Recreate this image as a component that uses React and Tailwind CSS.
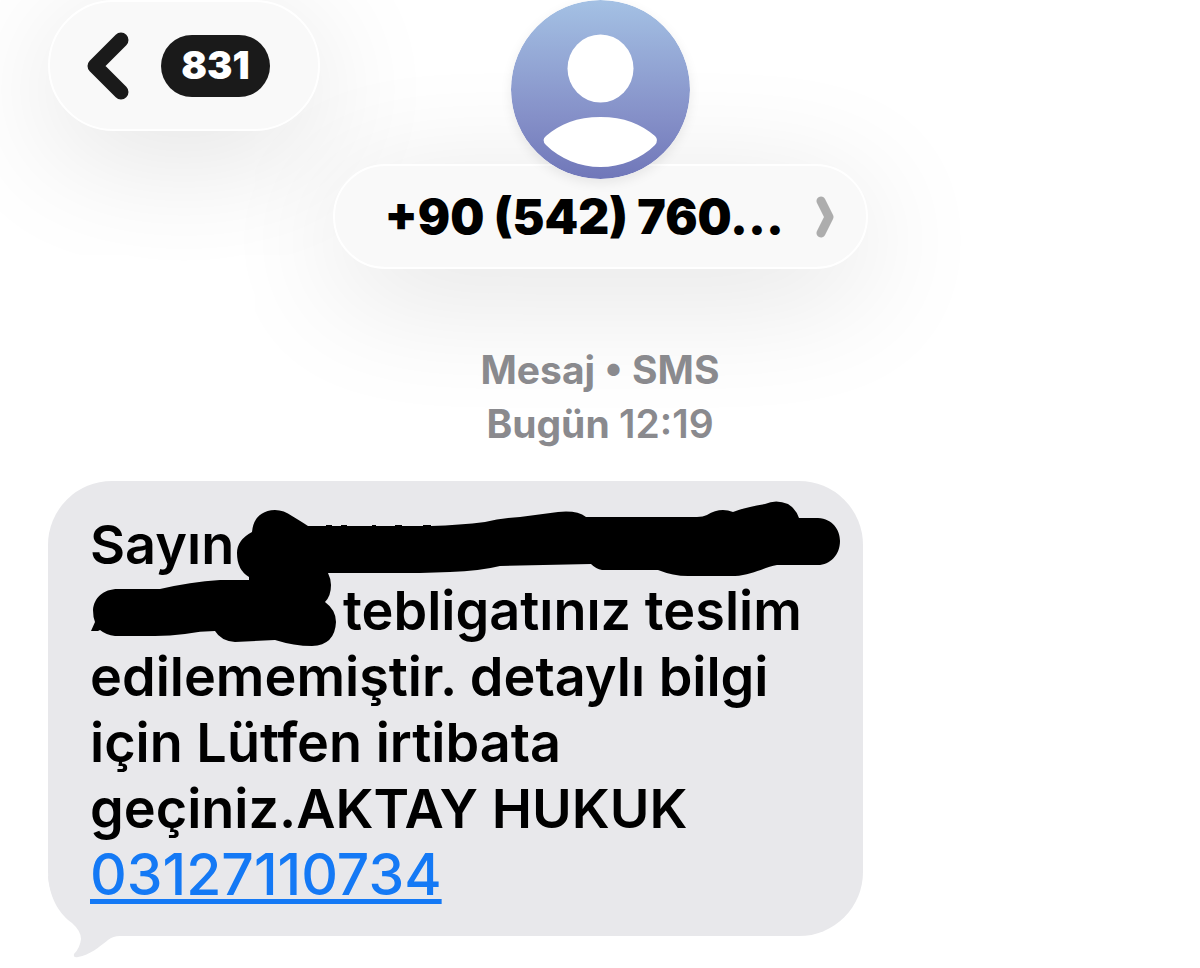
import React from "react";

const BackButton = ({ count }) => (
  <button
    aria-label="Geri"
    className="flex h-[131px] w-[272px] items-center gap-8 justify-self-start rounded-full border-2 border-white bg-[#f9f9f9] pl-[37px] shadow-[0_24px_130px_rgba(0,0,0,0.12)]"
  >
    <svg width="42" height="68" viewBox="0 0 42 68" fill="none">
      <path
        d="M34 8L8 34L34 60"
        stroke="#1a1a1a"
        strokeWidth="15"
        strokeLinecap="round"
        strokeLinejoin="round"
      />
    </svg>
    <span className="flex h-[62px] w-[109px] items-center justify-center rounded-full bg-[#1a1a1a] text-[38px] font-black text-white">
      {count}
    </span>
  </button>
);

const Avatar = () => (
  <svg
    className="relative rounded-full shadow-[0_4px_12px_rgba(0,0,0,0.08)]"
    width="179"
    height="179"
    viewBox="0 0 179 179"
  >
    <defs>
      <linearGradient id="avatar" x1="0" y1="0" x2="0" y2="1">
        <stop offset="0" stopColor="#a4c1e4" />
        <stop offset="0.65" stopColor="#8590c8" />
        <stop offset="1" stopColor="#7077b9" />
      </linearGradient>
    </defs>
    <circle cx="89.5" cy="89.5" r="89.5" fill="url(#avatar)" />
    <ellipse cx="89.5" cy="68.5" rx="33" ry="34" fill="#fff" />
    <path
      d="M35 136C49 124 66 117 89.500 117S130 124 144 136Q148 140 144 145C130 159 110 167 89.500 167S49 159 35 145Q30 140 35 136Z"
      fill="#fff"
    />
  </svg>
);

const Redaction = () => (
  <svg
    aria-hidden="true"
    className="absolute left-0 top-0"
    width="815"
    height="455"
    viewBox="48 481 815 455"
  >
    <path d="M237 553Q237 540 252 532Q254 511 275 510Q284 510 292 516Q302 522 308 526L326 526V525H332V526H341V525H347V526H372V525H376V526H395V525H402V526H423V525H431V526Q460 525 485 522Q500 518 520 517L558 512Q577 510 586 517H697Q703 517 707 515Q720 507 733 512Q745 507 765 504Q776 499 788 504Q796 509 799 518H818C833 519 840 530 840 541C840 555 830 565 818 565H777C765 567 752 575 735 576H688Q673 576 658 570H602Q596 569 591 564L500 566Q480 571 450 572L420 573H328Q331 579 331 585Q331 596 325 602Q336 610 336 622Q335 645 312 646Q294 646 275 640L235 642Q221 641 215 631Q200 631 185 634Q170 636 155 636H115Q106 635 100 630L98 631H91L95 622Q93 617 93 610C94 598 103 589 118 589H160Q190 582 220 580H249V577Q237 570 237 553Z" />
  </svg>
);

const Tail = () => (
  <svg
    aria-hidden="true"
    className="absolute -bottom-[22px] left-0"
    width="80"
    height="82"
    viewBox="48 876 80 82"
  >
    <path
      d="M48 876C50 900 60 914 72 923Q81 931 81 939Q80 948 74 954Q73 958 78 957C90 955 99 947 108 940Q113 936 120 936H128V876Z"
      fill="#e8e8eb"
    />
  </svg>
);

export default function App() {
  return (
    <div className="min-h-screen overflow-hidden bg-white font-['Inter',sans-serif] text-black">
      <header className="grid grid-cols-[1fr_auto_1fr] items-start px-12">
        <BackButton count={831} />
        <div className="flex flex-col items-center">
          <Avatar />
          <button className="-mt-[15px] flex h-[105px] w-[535px] items-center justify-between rounded-full border-2 border-white bg-[#f9f9f9] pl-[50px] pr-8 text-5xl font-black shadow-[0_24px_130px_rgba(0,0,0,0.12)]">
            <span>+90 (542) 760...</span>
            <svg width="18" height="42" viewBox="0 0 18 42" fill="none">
              <path
                d="M5 5L13 21L5 37"
                stroke="#adadad"
                strokeWidth="9"
                strokeLinecap="round"
                strokeLinejoin="round"
              />
            </svg>
          </button>
        </div>
      </header>

      <main className="px-12">
        <div className="mt-[74px] text-center text-[39px] leading-[54px] font-bold text-[#8a8a8e]">
          <p>Mesaj • SMS</p>
          <p>
            Bugün <time className="font-semibold">12:19</time>
          </p>
        </div>

        <div className="relative mt-[30px] max-w-[815px] rounded-[64px] bg-[#e8e8eb] px-[42px] pt-[31px] pb-7">
          <Tail />
          <p className="relative text-[54px] leading-[66px] font-semibold">
            <span className="block">Sayın</span>
            <span className="block pl-[253px]">tebligatınız teslim</span>
            <span className="block">edilememiştir. detaylı bilgi</span>
            <span className="block">için Lütfen irtibata</span>
            <span className="block">geçiniz.AKTAY HUKUK</span>
            <a
              href="tel:03127110734"
              className="block w-fit text-[57px] font-medium text-[#1479f5] underline decoration-[5px] underline-offset-[4px]"
            >
              03127110734
            </a>
          </p>
          <Redaction />
        </div>
      </main>
    </div>
  );
}
